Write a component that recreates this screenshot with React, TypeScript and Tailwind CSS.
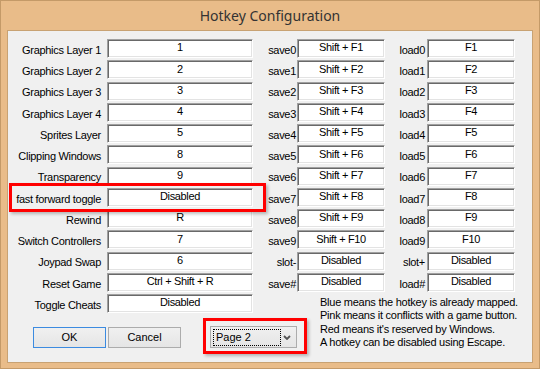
import React from 'react';

const leftRows: [string, string][] = [
  ['Graphics Layer 1', '1'],
  ['Graphics Layer 2', '2'],
  ['Graphics Layer 3', '3'],
  ['Graphics Layer 4', '4'],
  ['Sprites Layer', '5'],
  ['Clipping Windows', '8'],
  ['Transparency', '9'],
  ['fast forward toggle', 'Disabled'],
  ['Rewind', 'R'],
  ['Switch Controllers', '7'],
  ['Joypad Swap', '6'],
  ['Reset Game', 'Ctrl + Shift + R'],
];

const saveRows: [string, string][] = [
  ...Array.from({ length: 10 }, (_, i) => [`save${i}`, `Shift + F${i + 1}`] as [string, string]),
  ['slot-', 'Disabled'],
  ['save#', 'Disabled'],
];

const loadRows: [string, string][] = [
  ...Array.from({ length: 10 }, (_, i) => [`load${i}`, `F${i + 1}`] as [string, string]),
  ['slot+', 'Disabled'],
  ['load#', 'Disabled'],
];

const KeyBox = ({ value }: { value: string }) => (
  <div className="h-[19px] bg-white border border-t-[#a0a0a0] border-l-[#a0a0a0] border-r-white border-b-white shadow-[inset_1px_1px_0_#696969,inset_-1px_-1px_0_#e3e3e3] flex items-center justify-center pb-[2px] text-[11px] tracking-[-0.35px] text-black whitespace-nowrap">
    {value}
  </div>
);

const Label = ({ text, pr }: { text: string; pr: string }) => (
  <div className={`h-[19px] flex items-center justify-end pt-[3px] text-[11px] tracking-[-0.3px] text-black whitespace-nowrap ${pr}`}>
    {text}
  </div>
);

export default function App() {
  return (
    <div className="w-[540px] h-[369px] bg-[#e9bc89] border border-[#c49a68] px-[6px] pb-[5px] flex flex-col font-['Liberation_Sans',Arial,sans-serif] overflow-hidden">
      {/* Title bar */}
      <div className="h-[29px] flex items-center justify-center text-[14px] text-[#333] font-['Noto_Sans','Open_Sans',sans-serif]">
        Hotkey Configuration
      </div>

      {/* Client area */}
      <div className="relative flex-1 bg-[#f0f0f0] border border-[#c8a273] pt-[8px]">
        <div className="grid grid-cols-[99px_146px_44px_88px_42px_88px] auto-rows-[19px] gap-y-[2.25px]">
          {leftRows.map(([l, v], i) => (
            <React.Fragment key={l}>
              <Label text={l} pr="pr-[6px]" />
              <KeyBox value={v} />
              <Label text={saveRows[i][0]} pr="pr-[1px]" />
              <KeyBox value={saveRows[i][1]} />
              <Label text={loadRows[i][0]} pr="pr-[2px]" />
              <KeyBox value={loadRows[i][1]} />
            </React.Fragment>
          ))}
        </div>

        <div className="flex mt-[2.25px]">
          <div className="w-[312px] flex flex-col">
            <div className="grid grid-cols-[99px_146px]">
              <Label text="Toggle Cheats" pr="pr-[6px]" />
              <KeyBox value="Disabled" />
            </div>
            <div className="flex items-start mt-[5px] text-[11px] text-black">
              <button className="ml-[25px] mt-[9px] w-[73px] h-[21px] border border-[#3c8be0] bg-gradient-to-b from-[#f0f0f0] to-[#e5e5e5] flex items-center justify-center">
                OK
              </button>
              <button className="ml-[2px] mt-[9px] w-[73px] h-[21px] border border-[#acacac] bg-gradient-to-b from-[#f0f0f0] to-[#e5e5e5] flex items-center justify-center">
                Cancel
              </button>
              <div className="ml-[22px] border-[3px] border-[#ff0000] pl-[4px] pr-[7px] pt-[5px] pb-[3px] shadow-[2px_2px_3px_rgba(0,0,0,0.25)]">
                <div className="w-[87px] h-[22px] border border-[#acacac] bg-gradient-to-b from-[#f0f0f0] to-[#e5e5e5] flex items-center pl-[2px] pr-[5px]">
                  <div className="w-[68px] h-[17px] border border-dotted border-black flex items-center pl-[2px] text-[11px] text-black">
                    Page 2
                  </div>
                  <svg className="ml-auto" width="8" height="5" viewBox="0 0 8 5">
                    <path d="M1 1 L4 4 L7 1" stroke="#555" strokeWidth="1.8" fill="none" />
                  </svg>
                </div>
              </div>
            </div>
          </div>
          <div className="pt-[2px] text-[11px] leading-[13.3px] tracking-[-0.25px] text-black whitespace-nowrap">
            <div>Blue means the hotkey is already mapped.</div>
            <div>Pink means it conflicts with a game button.</div>
            <div>Red means it's reserved by Windows.</div>
            <div>A hotkey can be disabled using Escape.</div>
          </div>
        </div>

        {/* highlight annotation */}
        <div className="absolute left-[1px] top-[152px] w-[257px] h-[29px] border-[3px] border-[#ff0000] shadow-[2px_2px_3px_rgba(0,0,0,0.25)] pointer-events-none" />
      </div>
    </div>
  );
}
